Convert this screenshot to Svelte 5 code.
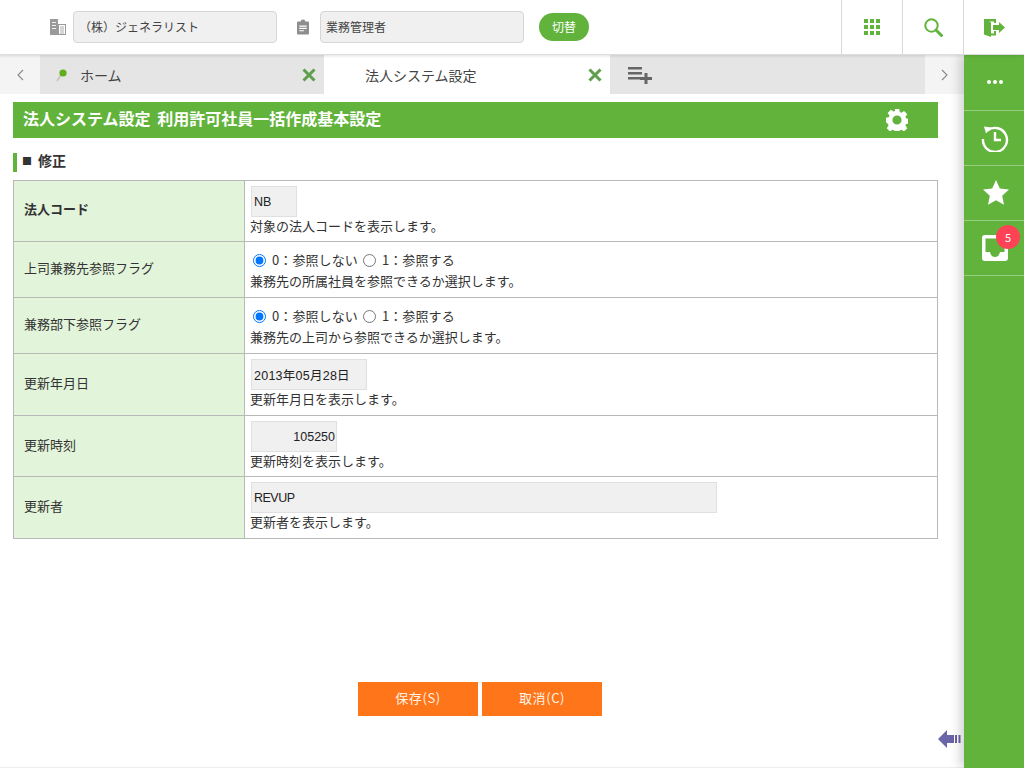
<script>
  const rows = [
    { label: '法人コード', bold: true, kind: 'input', value: 'NB', cls: 'w-code', help: '対象の法人コードを表示します。', tall: 'r61' },
    { label: '上司兼務先参照フラグ', kind: 'radio', name: 'a', help: '兼務先の所属社員を参照できるか選択します。', tall: 'r56' },
    { label: '兼務部下参照フラグ', kind: 'radio', name: 'b', help: '兼務先の上司から参照できるか選択します。', tall: 'r56' },
    { label: '更新年月日', kind: 'input', value: '2013年05月28日', cls: 'w-date', help: '更新年月日を表示します。', tall: 'r62' },
    { label: '更新時刻', kind: 'input', value: '105250', cls: 'w-time', help: '更新時刻を表示します。', tall: 'r61' },
    { label: '更新者', kind: 'input', value: 'REVUP', cls: 'w-user', help: '更新者を表示します。', tall: 'r62' }
  ];
</script>

<div class="app">
  <header class="top">
    <div class="selectors">
      <svg class="ic-building" width="16" height="16" viewBox="0 0 16 16">
        <rect x="0" y="0" width="8" height="16" fill="#9a9a9a"/>
        <rect x="2" y="3" width="4" height="1" fill="#eee"/><rect x="2" y="6" width="4" height="1" fill="#eee"/><rect x="2" y="9" width="4" height="1" fill="#eee"/>
        <rect x="8.5" y="5.5" width="7" height="10" fill="#fff" stroke="#9a9a9a"/>
        <path d="M10 8h4M10 10h4M10 12h4M10 14h4" stroke="#aaa" stroke-width="1"/>
      </svg>
      <input class="sel" readonly value="（株）ジェネラリスト" />
      <svg class="ic-clip" width="12" height="16" viewBox="0 0 13 16">
        <path d="M4 2 Q4 0 6.5 0 Q9 0 9 2 H12 Q13 2 13 3 V15 Q13 16 12 16 H1 Q0 16 0 15 V3 Q0 2 1 2 Z" fill="#8e8e8e"/>
        <path d="M2.500 7h8M2.500 9.500h8M2.500 12h5" stroke="#fff" stroke-width="1.200"/>
      </svg>
      <input class="sel role" readonly value="業務管理者" />
      <button class="switch">切替</button>
    </div>
    <div class="tool">
      <svg width="16" height="16" viewBox="0 0 16 16" fill="#62b33c">
        <rect width="4" height="4"/><rect x="6" width="4" height="4"/><rect x="12" width="4" height="4"/>
        <rect y="6" width="4" height="4"/><rect x="6" y="6" width="4" height="4"/><rect x="12" y="6" width="4" height="4"/>
        <rect y="12" width="4" height="4"/><rect x="6" y="12" width="4" height="4"/><rect x="12" y="12" width="4" height="4"/>
      </svg>
    </div>
    <div class="tool">
      <svg width="19" height="19" viewBox="0 0 19 19" fill="none" stroke="#62b33c">
        <circle cx="7.500" cy="7.500" r="6.200" stroke-width="2"/>
        <path d="M12 12l5.500 5.500" stroke-width="3" stroke-linecap="round"/>
      </svg>
    </div>
    <div class="tool last">
      <svg width="21" height="18" viewBox="0 0 21 18" fill="#62b33c">
        <path d="M0 0H12V4H10V2.500H5L7 3.500V14.500H10V12H12V16.500H7V18L0 15.500Z"/>
        <path d="M9 6H15V3L21 8.500L15 14V11H9Z"/>
      </svg>
    </div>
  </header>

  <div class="body">
    <div class="main">
      <nav class="tabs">
        <div class="pager">
          <svg width="7" height="12" viewBox="0 0 7 12" fill="none" stroke="#888" stroke-width="1.100"><path d="M6 1L1 6L6 11"/></svg>
        </div>
        <div class="tab">
          <svg class="pin" width="12" height="14" viewBox="0 0 12 14">
            <path d="M1 13L5 7" stroke="#c9c9b8" stroke-width="2"/>
            <circle cx="7" cy="5" r="3.600" fill="#5fae1e"/>
          </svg>
          <span class="tab-home">ホーム</span>
          <svg class="x" width="14" height="14" viewBox="0 0 14 14"><path d="M1.500 1.500L12.500 12.500M12.500 1.500L1.500 12.500" stroke="#5e9e4c" stroke-width="3"/></svg>
        </div>
        <div class="tab active">
          <span class="tab-sys">法人システム設定</span>
          <svg class="x" width="14" height="14" viewBox="0 0 14 14"><path d="M1.500 1.500L12.500 12.500M12.500 1.500L1.500 12.500" stroke="#5e9e4c" stroke-width="3"/></svg>
        </div>
        <div class="tab-rest">
          <svg width="24" height="18" viewBox="0 0 24 18" fill="#666">
            <rect y="1" width="14" height="2.500"/><rect y="6" width="14" height="2.500"/><rect y="11" width="14" height="2.500"/>
            <rect x="12" y="11" width="12" height="3"/><rect x="16.500" y="7" width="3" height="11"/>
          </svg>
        </div>
        <div class="pager">
          <svg width="7" height="12" viewBox="0 0 7 12" fill="none" stroke="#888" stroke-width="1.100"><path d="M1 1L6 6L1 11"/></svg>
        </div>
      </nav>

      <div class="content">
        <div class="title">
          <h1>法人システム設定 利用許可社員一括作成基本設定</h1>
          <svg width="22" height="22" viewBox="0 0 24 24" fill="#fff">
            <path fill-rule="evenodd" d="M9.500 0h5l.6 3.400 1.700.7 2.900-2 3.500 3.500-2 2.900.7 1.700 3.100.6v5l-3.100.6-.7 1.700 2 2.900-3.500 3.500-2.900-2-1.700.7-.6 3.300h-5l-.6-3.300-1.700-.7-2.900 2-3.500-3.500 2-2.900-.7-1.700L0 14.500v-5l3.100-.6.700-1.700-2-2.900 3.500-3.500 2.900 2 1.700-.7zM12 7a5 5 0 1 0 0 10a5 5 0 0 0 0-10z"/>
          </svg>
        </div>

        <h2 class="section"><span class="sq">■</span>修正</h2>

        <table>
          <tbody>
            {#each rows as row}
              <tr class={row.tall}>
                <th class:bold={row.bold}>{row.label}</th>
                <td>
                  {#if row.kind === 'input'}
                    <input class="field {row.cls}" readonly value={row.value} />
                  {:else}
                    <div class="radios">
                      <label><input type="radio" name={row.name} checked /><span class="opt0">0：参照しない</span></label>
                      <label><input type="radio" name={row.name} /><span class="opt1">1：参照する</span></label>
                    </div>
                  {/if}
                  <div class="help">{row.help}</div>
                </td>
              </tr>
            {/each}
          </tbody>
        </table>

        <div class="actions">
          <button class="act">保存(S)</button>
          <button class="act">取消(C)</button>
        </div>
      </div>

      <svg class="collapse" width="24" height="20" viewBox="0 0 24 20" fill="#6a64a8">
        <path d="M0 10L9 1V6H16V14H9V19Z"/>
        <rect x="17" y="6" width="2" height="8"/><rect x="20.500" y="6" width="2" height="8"/>
      </svg>
    </div>

    <aside class="side">
      <div class="side-item first">
        <svg width="16" height="4" viewBox="0 0 16 4" fill="#fff"><circle cx="2" cy="2" r="2"/><circle cx="8" cy="2" r="2"/><circle cx="14" cy="2" r="2"/></svg>
      </div>
      <div class="side-item">
        <svg width="28" height="28" viewBox="0 0 28 28" fill="none" stroke="#fff" stroke-width="2.400">
          <path d="M6.500 6.500A12 12 0 1 1 2 15"/>
          <path d="M14 8V16H20"/>
          <path d="M3 2.500L10.500 3.500L5 9.500Z" fill="#fff" stroke="none"/>
        </svg>
      </div>
      <div class="side-item star">
        <svg width="26" height="25" viewBox="0 0 26 25" fill="#fff"><path d="M13 0L16.800 8.400L26 9.500L19.200 15.700L21 24.800L13 20.200L5 24.800L6.800 15.700L0 9.500L9.200 8.400Z"/></svg>
      </div>
      <div class="side-item inbox">
        <svg width="26" height="26" viewBox="0 0 26 26" fill="none">
          <path fill-rule="evenodd" fill="#fff" d="M3 0H23Q26 0 26 3V23Q26 26 23 26H3Q0 26 0 23V3Q0 0 3 0ZM3.500 3.500V17H8Q9 22 13 22Q17 22 18 17H22.500V3.500Z"/>
        </svg>
        <span class="badge">5</span>
      </div>
    </aside>
  </div>
</div>

<style>
  :global(body) { margin: 0; background: #fff; }
  * { box-sizing: border-box; }
  .app {
    width: 1024px; height: 768px; overflow: hidden; display: flex; flex-direction: column;
    font-family: "Noto Sans CJK JP", "Noto Sans", sans-serif; font-size: 13px; color: #333;
  }
  .top {
    height: 55px; flex: none; display: flex; border-bottom: 1px solid #ddd; background: #fff;
    box-shadow: 0 1px 3px rgba(0,0,0,.12); position: relative; z-index: 2;
  }
  .selectors { flex: 1; display: flex; align-items: center; padding: 0 0 0 50px; }
  .ic-building { margin-right: 7px; }
  .ic-clip { margin: 0 11px 0 20px; }
  .sel {
    width: 204px; height: 32px; padding: 0 5px; border: 1px solid #d6d6d6; border-radius: 4px;
    background: #f0f0f0; font: inherit; font-size: 12px; color: #444; outline: none; margin-top: -1px;
  }
  .switch {
    width: 50px; height: 28px; margin: -1px 0 0 15px; border: 0; border-radius: 14px; background: #62b33c;
    color: #fff; font: inherit; font-size: 12px; padding: 0;
  }
  .tool {
    width: 61px; flex: none; display: flex; align-items: center; justify-content: center;
    border-left: 1px solid #d8d8d8;
  }
  .tool.last { padding-left: 1px; padding-top: 1px; }

  .body { flex: 1; min-height: 0; display: flex; }
  .main { flex: 1; min-width: 0; position: relative; border-bottom: 1px solid #eee; }
  .tabs { display: flex; height: 39px; background: #e5e5e5; }
  .pager {
    width: 40px; flex: none; background: #f4f4f4; display: flex; align-items: center; justify-content: center;
  }
  .tabs .pager:last-child { width: 39px; }
  .tab {
    width: 284px; flex: none; display: flex; align-items: center; padding: 0 8px 0 16px; font-size: 14px; color: #444;
  }
  .tab.active { width: 286px; background: #fff; padding-left: 41px; }
  .pin { margin-right: 12px; }
  .tab-home, .tab-sys { flex: 1; }
  .tab-rest { flex: 1; display: flex; align-items: center; padding-left: 18px; }

  .content { padding: 8px 26px 0 13px; }
  .title {
    height: 36px; background: #62b33c; display: flex; align-items: center; justify-content: space-between;
    padding: 0 30px 0 10px; color: #fff;
  }
  .title h1 { margin: 0 0 4px; font-size: 16px; font-weight: 700; line-height: 24px; word-spacing: 3px; }
  .section {
    margin: 15px 0 8px; height: 19px; line-height: 15px; border-left: 4px solid #62b33c; padding-left: 5px;
    font-size: 14px; font-weight: 700; display: flex;
  }
  .sq { width: 16px; font-size: 10px; }
  table { width: 925px; border-collapse: collapse; table-layout: fixed; border: 1px solid #b8b8b8; }
  th, td { border: 1px solid #b8b8b8; }
  th { width: 231px; background: #e2f4da; font-weight: 400; text-align: left; padding: 0 10px 4px; }
  th.bold { font-weight: 700; padding-bottom: 5px; }
  td { padding: 5px 5px 0; vertical-align: top; }
  .r61 { height: 61px; } .r56 { height: 56px; } .r62 { height: 62px; }
  .field {
    display: block; height: 31px; margin-left: 1px; padding: 0 2px; border: 1px solid #e0e0e0; background: #f0f0f0;
    font: 12.5px "Liberation Sans", "Noto Sans CJK JP", sans-serif; color: #222; outline: none;
  }
  .w-code { width: 46px; }
  .w-date { width: 116px; letter-spacing: .25px; }
  .w-time { width: 86px; text-align: right; padding-right: 1px; }
  .w-user { width: 466px; letter-spacing: -.5px; }
  .help { line-height: 18px; }
  .radios { display: flex; line-height: 20px; margin-top: 3px; margin-bottom: 2px; }
  .radios label { display: flex; align-items: center; }
  .radios input { margin: 0; width: 13px; height: 13px; }
  .opt0 { margin-left: 6px; margin-right: 5px; letter-spacing: .1px; }
  .opt1 { margin-left: 6px; letter-spacing: .1px; }
  .radios label:first-child { margin-left: 3px; }

  .actions { display: flex; gap: 4px; margin-top: 143px; padding-left: 345px; }
  .act {
    width: 120px; height: 34px; border: 0; background: #ff7519; color: #fff3e6; font: inherit; padding: 0 0 4px;
    letter-spacing: .6px;
  }
  .collapse { position: absolute; right: 2px; bottom: 18px; }

  .side {
    width: 60px; flex: none; background: #62b33c; box-shadow: -4px 0 10px rgba(0,0,0,.18);
    position: relative; z-index: 1;
  }
  .side-item {
    height: 55px; display: flex; align-items: center; justify-content: center; position: relative;
    border-bottom: 1px solid rgba(255,255,255,.35); padding-left: 2px;
  }
  .side-item.first { height: 56px; padding: 0 0 2px 1px; }
  .side-item.star { padding-bottom: 2px; padding-left: 3px; }
  .badge {
    position: absolute; left: 32px; top: 4px; width: 24px; height: 24px; border-radius: 50%;
    background: #ff4255; color: #fff; font-size: 11px; text-align: center; line-height: 24px;
  }
</style>
